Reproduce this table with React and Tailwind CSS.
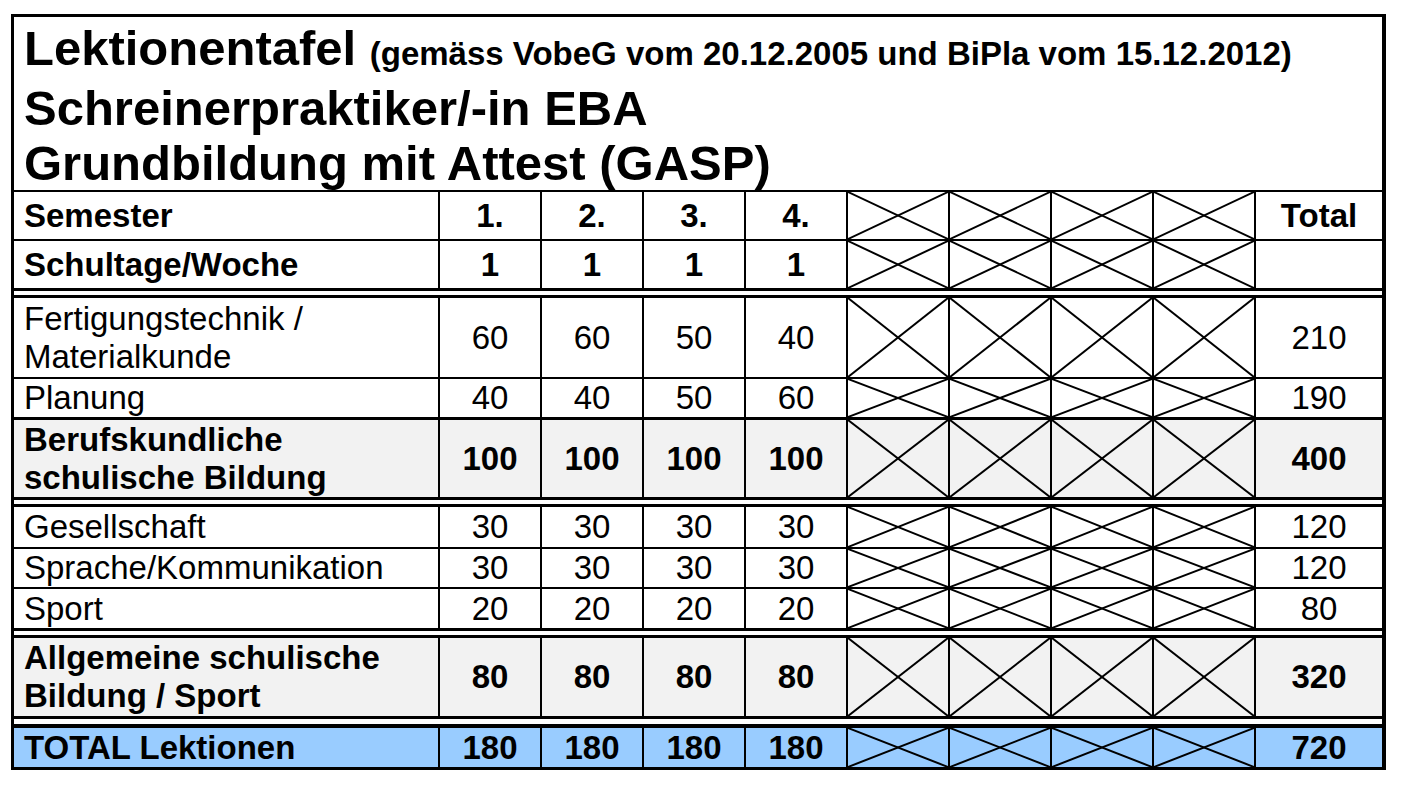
import React from 'react';

const Cross = () => (
    <svg className="absolute inset-0 block w-full h-full" viewBox="0 0 100 100" preserveAspectRatio="none">
        <line x1="0" y1="0" x2="100" y2="100" stroke="#000" strokeWidth="2" vectorEffect="non-scaling-stroke" />
        <line x1="0" y1="100" x2="100" y2="0" stroke="#000" strokeWidth="2" vectorEffect="non-scaling-stroke" />
    </svg>
);

const rows = [
    { label: ['Semester'], vals: ['1.', '2.', '3.', '4.'], total: 'Total', bold: true, cls: 'h-[49px] border-b-2' },
    { label: ['Schultage/Woche'], vals: ['1', '1', '1', '1'], total: '', bold: true, cls: 'h-[47px]' },
    'sep',
    { label: ['Fertigungstechnik /', 'Materialkunde'], vals: ['60', '60', '50', '40'], total: '210', cls: 'h-[81px] border-b-2' },
    { label: ['Planung'], vals: ['40', '40', '50', '60'], total: '190', cls: 'h-[41px] border-b-[3px]' },
    { label: ['Berufskundliche', 'schulische Bildung'], vals: ['100', '100', '100', '100'], total: '400', bold: true, cls: 'h-[77px] bg-[#f2f2f2]' },
    'sep',
    { label: ['Gesellschaft'], vals: ['30', '30', '30', '30'], total: '120', cls: 'h-[42px] border-b-2' },
    { label: ['Sprache/Kommunikation'], vals: ['30', '30', '30', '30'], total: '120', cls: 'h-[40px] border-b-2' },
    { label: ['Sport'], vals: ['20', '20', '20', '20'], total: '80', cls: 'h-[39px]' },
    'sep',
    { label: ['Allgemeine schulische', 'Bildung / Sport'], vals: ['80', '80', '80', '80'], total: '320', bold: true, cls: 'h-[78px] bg-[#f2f2f2]' },
    'sepLast',
    { label: ['TOTAL Lektionen'], vals: ['180', '180', '180', '180'], total: '720', bold: true, cls: 'h-[39px] bg-[#99ccff]' },
];

const Row = ({ row }) => (
    <div className={`grid grid-cols-[424px_repeat(8,102px)_1fr] grid-rows-[100%] border-black ${row.cls} ${row.bold ? 'font-bold' : ''}`}>
        <div className="flex flex-col justify-center px-[10px] leading-[38px]">
            {row.label.map((l) => (
                <span key={l}>{l}</span>
            ))}
        </div>
        {row.vals.map((v, i) => (
            <div key={i} className="flex items-center justify-center border-l-2 border-black">
                {v}
            </div>
        ))}
        {[0, 1, 2, 3].map((i) => (
            <div key={'x' + i} className="relative border-l-2 border-black">
                <Cross />
            </div>
        ))}
        <div className="flex items-center justify-center border-l-2 border-black">{row.total}</div>
    </div>
);

export default function App() {
    return (
        <div className="min-h-[790px] bg-white pt-[14px] pl-[11px] text-black font-['Liberation_Sans',Arial,sans-serif]">
            <div className="w-[1375px] border-[3px] border-r-4 border-black text-[33px]">
                {/* Title */}
                <div className="h-[175px] border-b-2 border-black px-[10px] pt-[4px] font-bold leading-[55px]">
                    <div className="text-[49px]">
                        Lektionentafel <span className="text-[33px]">(gemäss VobeG vom 20.12.2005 und BiPla vom 15.12.2012)</span>
                    </div>
                    <div className="text-[49px]">Schreinerpraktiker/-in EBA</div>
                    <div className="text-[49px]">Grundbildung mit Attest (GASP)</div>
                </div>

                {rows.map((row, i) => {
                    if (row === 'sep') return <div key={i} className="h-[10px] border-y-[3px] border-black bg-white" />;
                    if (row === 'sepLast') return <div key={i} className="h-[12px] border-t-[3px] border-b-4 border-black bg-white" />;
                    return <Row key={i} row={row} />;
                })}
            </div>
        </div>
    );
}
